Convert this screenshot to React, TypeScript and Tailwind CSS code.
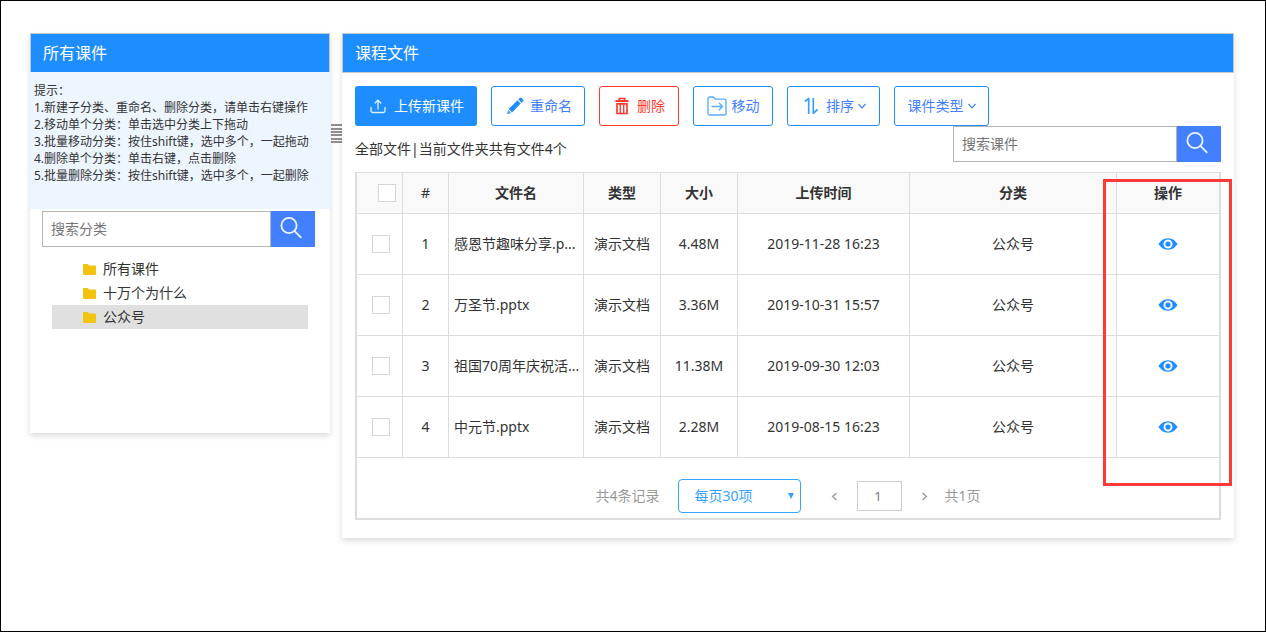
import { useState } from "react";

interface CourseFile {
  id: number;
  name: string;
  type: string;
  size: string;
  uploadedAt: string;
  category: string;
}

const files: CourseFile[] = [
  { id: 1, name: "感恩节趣味分享.p...", type: "演示文档", size: "4.48M", uploadedAt: "2019-11-28 16:23", category: "公众号" },
  { id: 2, name: "万圣节.pptx", type: "演示文档", size: "3.36M", uploadedAt: "2019-10-31 15:57", category: "公众号" },
  { id: 3, name: "祖国70周年庆祝活...", type: "演示文档", size: "11.38M", uploadedAt: "2019-09-30 12:03", category: "公众号" },
  { id: 4, name: "中元节.pptx", type: "演示文档", size: "2.28M", uploadedAt: "2019-08-15 16:23", category: "公众号" },
];

const categories = ["所有课件", "十万个为什么", "公众号"];

const tips = [
  "1.新建子分类、重命名、删除分类，请单击右键操作",
  "2.移动单个分类：单击选中分类上下拖动",
  "3.批量移动分类：按住shift键，选中多个，一起拖动",
  "4.删除单个分类：单击右键，点击删除",
  "5.批量删除分类：按住shift键，选中多个，一起删除",
];

const UploadIcon = () => (
  <svg className="w-4 h-4" viewBox="0 0 16 16" fill="none" stroke="currentColor" strokeWidth="1.3" strokeOpacity="0.85" strokeLinecap="round" strokeLinejoin="round">
    <path d="M8 11V2.5" />
    <path d="M5.2 5 8 2.2 10.800 5" />
    <path d="M1 9.500v3.300a1.700 1.700 0 0 0 1.700 1.700h10.600a1.700 1.700 0 0 0 1.700-1.700V9.500" />
  </svg>
);

const PencilIcon = () => (
  <svg className="w-[18px] h-[18px]" viewBox="0 0 18 18" fill="currentColor">
    <path d="m12.300 2.400 1.500-1.500a1.300 1.300 0 0 1 1.800 0l1.500 1.500a1.300 1.300 0 0 1 0 1.800l-1.500 1.500z" />
    <path d="m11.400 3.300 3.300 3.300-8.600 8.800-3.400-3.300z" />
    <path d="m2.200 12.900 3.100 3.100-4.500 1.300z" fillOpacity="0.8" />
  </svg>
);

const TrashIcon = () => (
  <svg className="w-[14px] h-[18px]" viewBox="0 0 14 18" fill="none" stroke="currentColor" strokeWidth="1.700">
    <path d="M.5 4h13" strokeWidth="2" />
    <path d="M4.300 3.300V1.500h5.400v1.800" />
    <path d="M2 6.800v9.700h10V6.800z" />
    <path d="M5.300 7v9M8.700 7v9" strokeWidth="1.400" />
  </svg>
);

const MoveIcon = () => (
  <svg className="w-5 h-5" viewBox="0 0 20 20" fill="none" stroke="currentColor" strokeWidth="1.400" strokeLinecap="round" strokeLinejoin="round">
    <path d="M1 3a2 2 0 0 1 2-2h2.600a2 2 0 0 1 1.700 1l.3.500a1.600 1.600 0 0 0 1.300.6H17a2 2 0 0 1 2 2V17a2 2 0 0 1-2 2H3a2 2 0 0 1-2-2z" />
    <path d="M5 10.500h10.500M12.300 7.300l3.200 3.200-3.200 3.200" />
  </svg>
);

const SortIcon = () => (
  <svg className="w-4 h-[18px]" viewBox="0 0 16 18" fill="none" stroke="currentColor" strokeWidth="1.700" strokeLinejoin="round">
    <path d="M2 4.500 5.700 1.500V17" />
    <path d="M10.300 1v15.300L14.500 12.500" />
  </svg>
);

const ChevronIcon = () => (
  <svg className="w-2 h-[6px]" viewBox="0 0 8 6" fill="none" stroke="currentColor" strokeWidth="1.200">
    <path d="m.5 1 3.500 3.800L7.500 1" />
  </svg>
);

const SearchIcon = () => (
  <svg className="w-6 h-6" viewBox="0 0 24 24" fill="none" stroke="currentColor" strokeWidth="1.800" strokeOpacity="0.9" strokeLinecap="round">
    <circle cx="10" cy="10.500" r="7.600" />
    <path d="m15.600 16.100 6.200 6.200" />
  </svg>
);

const FolderIcon = () => (
  <svg className="w-[13px] h-3" viewBox="0 0 13 12" fill="#f1c40f">
    <path d="M0 2a1 1 0 0 1 1-1h3.700L6 2.600h6a1 1 0 0 1 1 1V11a1 1 0 0 1-1 1H1a1 1 0 0 1-1-1z" />
  </svg>
);

const EyeIcon = () => (
  <svg className="w-5 h-3" viewBox="0 0 20 12" fill="#1e8dff">
    <path fillRule="evenodd" d="M10 .3c4.600 0 7.800 2.900 9.500 5.700-1.700 2.800-4.900 5.700-9.500 5.700S2.200 8.800.5 6C2.200 3.200 5.400.3 10 .3zm0 1.200a4.500 4.500 0 1 0 0 9 4.500 4.500 0 0 0 0-9z" />
    <circle cx="10" cy="6" r="2.600" />
  </svg>
);

const GripIcon = () => (
  <svg className="w-[11px] h-5" viewBox="0 0 11 20" stroke="#8f8f8f" strokeWidth="2">
    <path d="M0 1h11M0 5h11M0 8h11M0 11h11M0 15h11M0 18h11" />
  </svg>
);

const SearchBox = ({ label, className }: { label: string; className: string }) => (
  <form className={`flex h-9 ${className}`} onSubmit={(e) => e.preventDefault()}>
    <input
      type="text"
      aria-label={label}
      placeholder={label}
      className="min-w-0 flex-1 border border-[#b5b5b5] bg-white px-2 text-sm outline-none placeholder:text-[#757575]"
    />
    <button type="submit" aria-label="搜索" className="flex w-11 items-center justify-center bg-[#4280ff] pr-1 pb-1 text-white">
      <SearchIcon />
    </button>
  </form>
);

const Checkbox = ({ label }: { label: string }) => (
  <input
    type="checkbox"
    aria-label={label}
    className="block h-[18px] w-[18px] appearance-none border border-[#d6d6d6] bg-white checked:bg-[#1e8dff]"
  />
);

const Sidebar = () => {
  const [active, setActive] = useState("公众号");

  return (
    <aside className="w-[300px] shrink-0 bg-white pb-[104px] shadow-[0_3px_6px_rgba(0,0,0,0.14)]">
      <h2 className="border border-b-0 border-[#c4c8cc] bg-[#1e8dff] px-3 py-[6px] text-base leading-[26px] text-white">
        所有课件
      </h2>
      <div className="bg-[#edf5ff] px-1 pt-[10px] pb-[25px] text-xs leading-[17px]">
        <p>提示：</p>
        {tips.map((tip) => (
          <p key={tip} className="whitespace-nowrap">{tip}</p>
        ))}
      </div>
      <SearchBox label="搜索分类" className="mt-[2px] mr-[15px] ml-3" />
      <ul className="mt-[10px] mr-[22px] ml-[22px]">
        {categories.map((name) => (
          <li key={name}>
            <button
              type="button"
              onClick={() => setActive(name)}
              className={`flex h-6 w-full items-center gap-[7px] pl-[31px] text-sm ${active === name ? "bg-[#e0e0e0]" : ""}`}
            >
              <FolderIcon />
              {name}
            </button>
          </li>
        ))}
      </ul>
    </aside>
  );
};

const Toolbar = () => (
  <div className="flex gap-[14px] text-sm text-[#4280ff]">
    <button type="button" className="flex h-10 w-[122px] items-center justify-center gap-2 rounded-[3px] bg-[#1e8dff] pl-[2px] text-white">
      <UploadIcon />
      上传新课件
    </button>
    <button type="button" className="flex h-10 w-[94px] items-center justify-center gap-[6px] rounded-[3px] border border-[#1e8dff] pl-[2px]">
      <span className="text-[#1e8dff]"><PencilIcon /></span>
      重命名
    </button>
    <button type="button" className="flex h-10 w-20 items-center justify-center gap-2 rounded-[3px] border border-[#ff3b30] pl-[2px] text-[#ff3b30]">
      <TrashIcon />
      删除
    </button>
    <button type="button" className="flex h-10 w-20 items-center justify-center gap-[5px] rounded-[3px] border border-[#1e8dff]">
      <span className="text-[#5aaeff]"><MoveIcon /></span>
      移动
    </button>
    <button type="button" className="flex h-10 w-[93px] items-center justify-center rounded-[3px] border border-[#1e8dff] pl-[2px]">
      <span className="mr-[7px] text-[#3d9dff]"><SortIcon /></span>
      <span className="mr-1">排序</span>
      <ChevronIcon />
    </button>
    <button type="button" className="flex h-10 w-[95px] items-center justify-center gap-1 rounded-[3px] border border-[#1e8dff]">
      课件类型
      <ChevronIcon />
    </button>
  </div>
);

const FileTable = () => {
  const head = "h-[41px] border-r border-b border-[#ddd] p-0 font-bold";
  const cell = "h-[61px] border-r border-b border-[#ddd] p-0";

  return (
    <table className="w-full table-fixed border-separate border-spacing-0 text-center text-sm">
      <colgroup>
        <col className="w-[46px]" />
        <col className="w-[46px]" />
        <col className="w-[135px]" />
        <col className="w-[77px]" />
        <col className="w-[77px]" />
        <col className="w-[172px]" />
        <col />
        <col className="w-[102px]" />
      </colgroup>
      <thead className="bg-[#f9f9f9]">
        <tr>
          <th className={`${head} pl-[21px]`}><Checkbox label="全选" /></th>
          <th className="h-[41px] border-r border-b border-[#ddd] p-0 font-normal">#</th>
          <th className={head}>文件名</th>
          <th className={head}>类型</th>
          <th className={head}>大小</th>
          <th className={head}>上传时间</th>
          <th className={head}>分类</th>
          <th className="h-[41px] border-b border-[#ddd] p-0 font-bold">操作</th>
        </tr>
      </thead>
      <tbody>
        {files.map((file) => (
          <tr key={file.id}>
            <td className={`${cell} pl-[15px]`}><Checkbox label={file.name} /></td>
            <td className={cell}>{file.id}</td>
            <td className={`${cell} whitespace-nowrap pl-[5px] text-left`}>{file.name}</td>
            <td className={cell}>{file.type}</td>
            <td className={cell}>{file.size}</td>
            <td className={cell}>{file.uploadedAt}</td>
            <td className={cell}>{file.category}</td>
            <td className="h-[61px] border-b border-[#ddd] p-0">
              <button type="button" aria-label="查看" className="mx-auto block">
                <EyeIcon />
              </button>
            </td>
          </tr>
        ))}
      </tbody>
    </table>
  );
};

const Pagination = () => (
  <div className="flex items-center justify-center pt-[21px] pb-[5px] text-sm text-[#999]">
    <span className="mr-[18px]">共4条记录</span>
    <div className="relative mr-[30px]">
      <select aria-label="每页条数" className="h-[34px] w-[123px] appearance-none rounded-[4px] border border-[#38a3ff] bg-white pl-4 text-sm text-[#38a3ff]">
        <option>每页30项</option>
        <option>每页50项</option>
      </select>
      <svg className="pointer-events-none absolute top-[14px] right-[7px] w-[6px] h-[6px]" viewBox="0 0 6 6" fill="#38a3ff">
        <path d="M0 0h6L3 6z" />
      </svg>
    </div>
    <button type="button" aria-label="上一页" className="mr-[19px]">
      <svg className="w-[7px] h-[9px]" viewBox="0 0 7 9" fill="none" stroke="currentColor" strokeWidth="1.300">
        <path d="M5.500 1 1.500 4.500l4 3.500" />
      </svg>
    </button>
    <input type="text" aria-label="页码" defaultValue="1" className="mr-[19px] h-[30px] w-[45px] border border-[#ccc] bg-white pr-[2px] text-center text-[13px] text-[#777]" />
    <button type="button" aria-label="下一页" className="mr-[17px]">
      <svg className="w-[7px] h-[9px]" viewBox="0 0 7 9" fill="none" stroke="currentColor" strokeWidth="1.300">
        <path d="m1.500 1 4 3.500-4 3.500" />
      </svg>
    </button>
    <span>共1页</span>
  </div>
);

const App = () => {
  return (
    <div className="flex min-h-screen items-start border border-black bg-white pt-8 pr-[31px] pb-8 pl-[29px] font-['Noto_Sans','Noto_Sans_CJK_SC',sans-serif] text-[#333]">
      <Sidebar />

      <div className="mt-[91px] flex w-3 shrink-0 cursor-col-resize justify-end">
        <GripIcon />
      </div>

      <main className="min-w-0 flex-1 bg-white pb-[18px] shadow-[0_3px_6px_rgba(0,0,0,0.14)]">
        <h2 className="border border-[#c4c8cc] bg-[#1e8dff] px-3 py-[6px] text-base leading-[26px] text-white">
          课程文件
        </h2>
        <div className="px-[13px] pt-[13px]">
          <Toolbar />
          <div className="flex items-start justify-between">
            <p className="pt-[13px] text-sm">全部文件|当前文件夹共有文件4个</p>
            <SearchBox label="搜索课件" className="w-[268px]" />
          </div>
          <div className="relative mt-[10px] border-2 border-t border-[#ddd]">
            <FileTable />
            <Pagination />
            {/* highlight frame around the action column */}
            <div className="pointer-events-none absolute top-[6px] right-[-13px] h-[307px] w-[129px] border-[3px] border-[#ff3838]" />
          </div>
        </div>
      </main>
    </div>
  );
};

export default App;
